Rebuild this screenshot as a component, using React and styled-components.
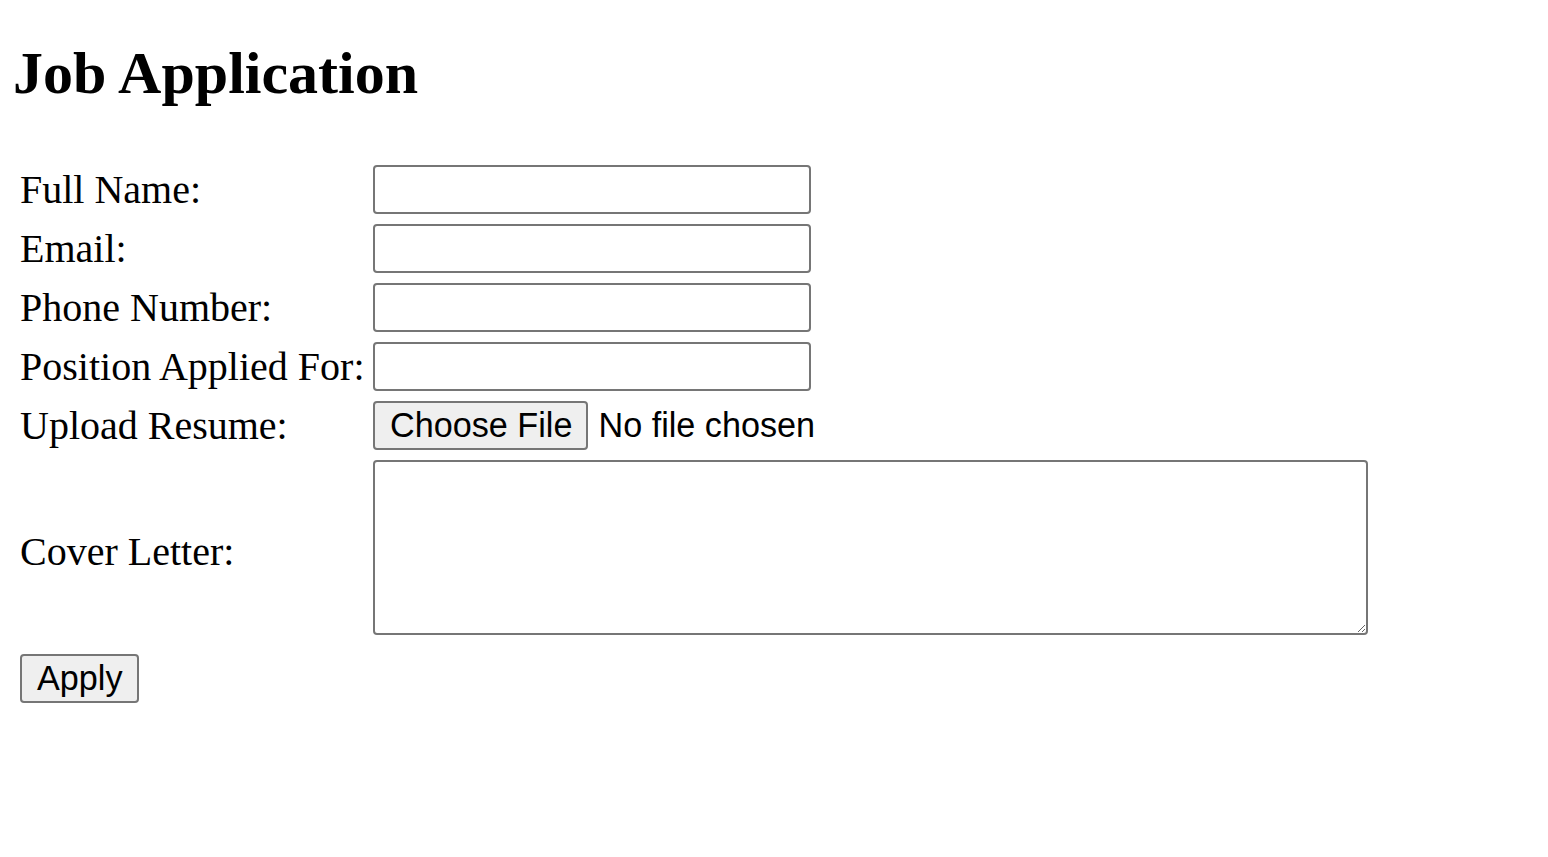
import React from "react";
import styled, { createGlobalStyle } from "styled-components";

const GlobalStyle = createGlobalStyle`
  body {
    margin: 0;
    background: #fff;
    color: #000;
    font-family: "Liberation Serif", "Times New Roman", serif;
  }
`;

const Page = styled.div`
  padding: 39px 0 0 13px;
`;

const Heading = styled.h1`
  margin: 0;
  font-size: 60px;
  line-height: 68px;
  font-weight: bold;
`;

const Form = styled.form`
  margin-top: 58px;
  padding-left: 7px;
`;

const Grid = styled.div`
  display: grid;
  grid-template-columns: 353px auto;
  row-gap: 10px;
  align-items: center;
  justify-items: start;
`;

const Label = styled.label`
  font-size: 40px;
  line-height: 46px;
  white-space: nowrap;
  padding-top: ${(p) => p.$drop || 0}px;
`;

const TextInput = styled.input`
  box-sizing: border-box;
  width: 438px;
  height: 49px;
  margin: 0;
  padding: 3px 5px;
  border: 2px solid #767676;
  border-radius: 4px;
  font-family: "Liberation Sans", Arial, sans-serif;
  font-size: 34px;
  background: #fff;
  outline: none;
`;

const FileRow = styled.div`
  display: flex;
  align-items: center;
  gap: 10px;
  font-family: "Liberation Sans", Arial, sans-serif;
  font-size: 34.2px;
`;

const HiddenFile = styled.input`
  display: none;
`;

const Button = styled.button`
  box-sizing: border-box;
  height: 49px;
  margin: 0;
  padding: 0 14px 0 15px;
  border: 2px solid #767676;
  border-radius: 4px;
  background: #efefef;
  color: #000;
  font-family: "Liberation Sans", Arial, sans-serif;
  font-size: 34.2px;
  line-height: 39px;
  cursor: default;
`;

const FileName = styled.span`
  line-height: 39px;
`;

const TextArea = styled.textarea`
  box-sizing: border-box;
  width: 995px;
  height: 175px;
  margin: 0;
  padding: 3px 5px;
  border: 2px solid #767676;
  border-radius: 4px;
  font-family: "Liberation Mono", monospace;
  font-size: 34px;
  outline: none;
`;

const Actions = styled.div`
  margin-top: 19px;
`;

const fields = [
  { id: "name", label: "Full Name:", type: "text" },
  { id: "email", label: "Email:", type: "email" },
  { id: "phone", label: "Phone Number:", type: "tel" },
  { id: "position", label: "Position Applied For:", type: "text" },
];

export default function App() {
  return (
    <Page>
      <GlobalStyle />
      <Heading>Job Application</Heading>
      <Form onSubmit={(e) => e.preventDefault()}>
        <Grid>
          {fields.map((f) => [
            <Label key={f.id + "-l"} htmlFor={f.id}>
              {f.label}
            </Label>,
            <TextInput key={f.id} id={f.id} type={f.type} />,
          ])}
          <Label htmlFor="resume">Upload Resume:</Label>
          <FileRow>
            <HiddenFile id="resume" type="file" />
            <Button type="button">Choose File</Button>
            <FileName>No file chosen</FileName>
          </FileRow>
          <Label htmlFor="cover" $drop={8}>
            Cover Letter:
          </Label>
          <TextArea id="cover" />
        </Grid>
        <Actions>
          <Button type="submit">Apply</Button>
        </Actions>
      </Form>
    </Page>
  );
}
